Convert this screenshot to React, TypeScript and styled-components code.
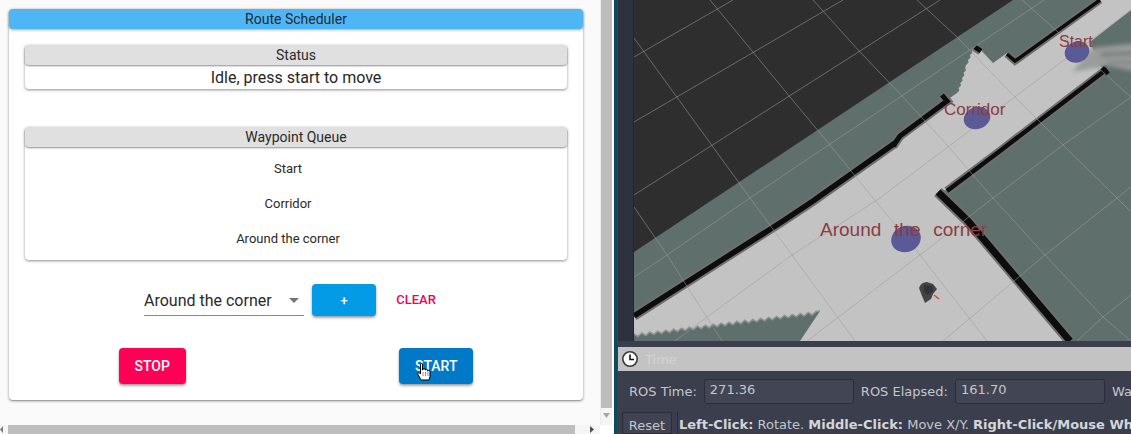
import React from "react";
import styled, { createGlobalStyle } from "styled-components";

const Global = createGlobalStyle`
  html, body { margin: 0; padding: 0; background: #fff; overflow: hidden; }
  #root { width: 1131px; height: 434px; }
  * { box-sizing: border-box; }
`;

const Page = styled.div`
  display: flex;
  width: 1131px;
  height: 434px;
  overflow: hidden;
  font-family: Roboto, sans-serif;
`;

const LeftPane = styled.div`
  display: grid;
  grid-template-columns: 600px 12px;
  grid-template-rows: 425px 9px;
  width: 612px;
  flex: none;
  background: #fafafa;
`;

const Main = styled.main`
  padding: 9px 17px 0 9px;
`;

const Card = styled.section`
  height: 391px;
  background: #fff;
  border-radius: 4px;
  box-shadow: 0 1px 3px rgba(0, 0, 0, 0.4), 0 1px 1px rgba(0, 0, 0, 0.14);
  display: flex;
  flex-direction: column;
`;

const Title = styled.h1`
  margin: 0;
  height: 20px;
  background: #4fb6f5;
  border-radius: 4px;
  box-shadow: 0 1px 3px rgba(0, 0, 0, 0.35);
  color: #1f2a33;
  font-size: 14px;
  font-weight: 400;
  line-height: 20px;
  text-align: center;
`;

const Panel = styled.div<{ $top: number }>`
  margin: ${(p) => p.$top}px 16px 0;
  background: #fff;
  border-radius: 4px;
  box-shadow: 0 1px 3px rgba(0, 0, 0, 0.45);
`;

const PanelHead = styled.h2`
  margin: 0;
  height: 20px;
  background: #e0e0e0;
  border-radius: 4px;
  box-shadow: 0 1px 2px rgba(0, 0, 0, 0.45);
  color: #2a2a2a;
  font-size: 14px;
  font-weight: 400;
  line-height: 20px;
  text-align: center;
`;

const StatusText = styled.div`
  height: 24px;
  color: #262626;
  font-size: 16px;
  line-height: 25px;
  text-align: center;
`;

const Queue = styled.ul`
  margin: 0;
  padding: 4px 16px 4px 0;
  list-style: none;
`;

const QueueItem = styled.li`
  height: 35px;
  color: #2a2a2a;
  font-size: 13px;
  line-height: 35px;
  text-align: center;
`;

const PickerRow = styled.div`
  display: flex;
  justify-content: center;
  gap: 8px;
  margin-top: 24px;
  height: 32px;
`;

const Select = styled.div`
  position: relative;
  width: 160px;
  height: 32px;
  border-bottom: 1px solid #8a8a8a;
  color: #2a2a2a;
  font-size: 16px;
  line-height: 33px;
`;

const Caret = styled.svg`
  position: absolute;
  right: 5px;
  top: 14px;
`;

const Fill = styled.button<{ $bg: string; $size?: number; $w?: number }>`
  border: 0;
  padding: 0 16px;
  height: 100%;
  ${(p) => (p.$w ? `width: ${p.$w}px;` : "")}
  background: ${(p) => p.$bg};
  border-radius: 4px;
  color: #fff;
  font-family: Roboto, sans-serif;
  font-size: ${(p) => p.$size ?? 14}px;
  font-weight: 500;
  box-shadow: 0 2px 3px rgba(0, 0, 0, 0.28), 0 1px 2px rgba(0, 0, 0, 0.18);
`;

const TextButton = styled.button`
  border: 0;
  padding: 0 0 2px;
  width: 64px;
  background: none;
  color: #f50057;
  font-family: Roboto, sans-serif;
  font-size: 13px;
  font-weight: 500;
`;

const Actions = styled.div`
  display: flex;
  justify-content: space-around;
  height: 36px;
  margin-top: 32px;
  padding: 0 3px;
`;

const StartWrap = styled.div`
  position: relative;
`;

const HandCursor = styled.svg`
  position: absolute;
  left: 18px;
  top: 15px;
`;

const VScroll = styled.div`
  position: relative;
  background: #f5f5f5;
  border-left: 1px solid #ececec;
`;

const VThumb = styled.div`
  width: 11px;
  height: 408px;
  background: #bdbdbd;
`;

const VArrow = styled.svg`
  position: absolute;
  left: 2px;
  top: 413px;
`;

const HScroll = styled.div`
  display: flex;
  align-items: center;
  background: #f5f5f5;
`;

const HArrow = styled.svg`
  flex: none;
`;

const HThumb = styled.div`
  width: 567px;
  flex: none;
  height: 9px;
  margin: 0 15px 0 5px;
  background: #bdbdbd;
`;

const ScrollCorner = styled.div`
  background: #fff;
`;

const RightPane = styled.div`
  flex: 1;
  display: flex;
  flex-direction: column;
  border-left: 2px solid #fff;
  min-width: 0;
`;

const Frame = styled.div`
  flex: 1;
  display: flex;
  flex-direction: column;
  background: #3a3e4d;
  border-left: 3px solid #0e4a5a;
  min-width: 0;
  font-family: "DejaVu Sans", sans-serif;
  color: #c4c6cc;
  font-size: 13px;
`;

const ViewRow = styled.div`
  display: flex;
  height: 341px;
  background: #3a3e4d;
`;

const Dock = styled.div`
  width: 16px;
  flex: none;
  margin-left: 1px;
  background: #2d3140;
  border-right: 1px solid #23262f;
`;

const TimeBar = styled.div`
  display: flex;
  align-items: center;
  gap: 6px;
  height: 24px;
  margin: 6px 0 0 1px;
  padding-left: 3px;
  background: #c3c3c3;
  color: #d2d3d6;
`;

const TimeRow = styled.div`
  display: flex;
  align-items: center;
  height: 41px;
  padding-left: 12px;
  white-space: nowrap;
`;

const Label = styled.span`
  flex: none;
`;

const Field = styled.div<{ $left: number; $right: number }>`
  width: 150px;
  height: 25px;
  flex: none;
  margin: 0 ${(p) => p.$right}px 0 ${(p) => p.$left}px;
  padding-left: 5px;
  background: #414554;
  border: 1px solid #2a2d38;
  border-radius: 3px;
  line-height: 20px;
`;

const HelpRow = styled.div`
  display: flex;
  gap: 5px;
  height: 22px;
  padding-left: 5px;
  white-space: nowrap;
  overflow: hidden;
`;

const ResetButton = styled.div`
  width: 50px;
  flex: none;
  border: 1px solid #2a2d38;
  background: #3f4352;
  border-radius: 2px 2px 0 0;
  text-align: center;
  line-height: 25px;
`;

const HelpText = styled.div`
  padding-left: 1px;
  border-left: 1px solid #2a2d38;
  line-height: 25px;
  b { font-weight: 700; color: #d4d6da; }
`;

const jag = (pts: [number, number][], step: number, ax: number, ay: number) => {
  const out: string[] = [];
  for (let s = 0; s < pts.length - 1; s++) {
    const [x0, y0] = pts[s];
    const [x1, y1] = pts[s + 1];
    const n = Math.max(1, Math.round(Math.hypot(x1 - x0, y1 - y0) / step));
    for (let i = 0; i < n; i++) {
      const t = i / n;
      const k = i % 2 ? 1 : 0;
      out.push(`${x0 + (x1 - x0) * t + k * ax},${y0 + (y1 - y0) * t + k * ay}`);
    }
  }
  const l = pts[pts.length - 1];
  out.push(`${l[0]},${l[1]}`);
  return out.join(" ");
};

const freeEdge = jag([[957, 93], [962, 78], [966, 65], [972, 50]], 2.5, 1.5, 0);
const freeArea = `634,315 813,200 897,140 947,100 ${freeEdge} 978,47 993,63 1007,53 1015,60 1100,0 1131,0 1131,10 1090,42 1100,66 1107,70 947,190 938,192 968,220 1070,341 634,341`;

const sawEdge = jag([[634, 334], [820, 311]], 4, 0, 3);

const gridLines = [
  "634,57 733,0",
  "634,122 843,0",
  "634,195 940,0",
  "634,277 667,255 750,198 1044,0",
  "675,341 707,317 792,255 877,200 1131,10",
  "807,341 920,255 993,198 1063,145 1131,97",
  "943,341 1045,255 1117,198 1131,187",
  "1077,341 1103,317 1131,295",
  "634,207 667,255 722,341",
  "634,38 750,198 792,255 855,341",
  "710,0 753,52 790,97 830,145 873,198 920,255 987,341",
  "813,0 860,52 903,97 947,145 993,198 1045,255 1103,317 1131,341",
  "917,0 958,38 1015,97 1063,145 1117,198 1131,212",
  "1022,0 1131,97",
];

const walls: { p: string; w: number }[] = [
  { p: "634,316 783,221 813,201 895,143", w: 5.5 },
  { p: "893,146 900,136 947,101 942,95", w: 5 },
  { p: "975,47 981,51", w: 5 },
  { p: "1007,54 1015,61 1100,0", w: 3.5 },
  { p: "1107,69 1000,151 947,191", w: 4.5 },
  { p: "1102,68 1108,74", w: 5 },
  { p: "938,192 968,221 1070,341", w: 7 },
];

const MapView = () => (
  <svg width="497" height="341" viewBox="634 0 497 341" style={{ display: "block", flex: "none" }}>
    <defs>
      <filter id="soft" filterUnits="userSpaceOnUse" x="1050" y="30" width="100" height="60">
        <feGaussianBlur stdDeviation="2" />
      </filter>
    </defs>
    <rect x="634" y="0" width="497" height="341" fill="#5f6f6c" />
    <polygon points="634,0 1013,0 634,252" fill="#2e2e2e" />
    <polygon points={freeArea} fill="#c3c3c3" />
    <g filter="url(#soft)">
      <polygon points="1092,48 1140,43 1140,72 1108,66 1072,72" fill="#9a9d9c" />
      <polygon points="1100,52 1140,50 1140,56 1100,57" fill="#7f8584" />
      <polygon points="1105,61 1140,60 1140,65 1108,65" fill="#868c8b" />
    </g>
    <polygon points={`${sawEdge} 806,332 800,341 634,341`} fill="#5f6f6c" />
    <polyline points={sawEdge} fill="none" stroke="#8d9392" strokeWidth="1.5" />
    {walls.map(({ p, w }) => (
      <polyline key={"h" + p} points={p} fill="none" stroke="#6f6f6f" strokeWidth={w + 4} />
    ))}
    {walls.map(({ p, w }) => (
      <polyline key={p} points={p} fill="none" stroke="#0d0d0d" strokeWidth={w} />
    ))}
    {gridLines.map((p) => (
      <polyline key={"g" + p} points={p} fill="none" stroke="#9d9d9d" strokeWidth="1" opacity="0.55" />
    ))}
    <ellipse cx="1077" cy="52" rx="12.5" ry="10.5" fill="#5a5a96" transform="rotate(-20 1077 52)" />
    <ellipse cx="977" cy="118" rx="13.5" ry="11" fill="#5a5a96" transform="rotate(-20 977 118)" />
    <ellipse cx="906" cy="239" rx="15" ry="13" fill="#5a5a96" transform="rotate(-20 906 239)" />
    <g fill="#8c3c40" fontFamily="'Liberation Sans', sans-serif">
      <text x="1059" y="47" fontSize="16">Start</text>
      <text x="944" y="115" fontSize="17">Corridor</text>
      <text x="820" y="236" fontSize="19" wordSpacing="7.5">Around the corner</text>
    </g>
    <path d="M919 288 Q921 282 927 282 L933 284 L937 289 L933 294 L931 299 L925 303 L922 296 Z" fill="#444" />
    <path d="M924 285 L932 286 L933 291 L928 295 L924 292 Z" fill="#333" />
    <path d="M934 295 L939 299" stroke="#e53935" strokeWidth="1.3" />
  </svg>
);

export default function App() {
  return (
    <>
      <Global />
      <Page>
        <LeftPane>
          <Main>
            <Card>
              <Title>Route Scheduler</Title>
              <Panel $top={16}>
                <PanelHead>Status</PanelHead>
                <StatusText>Idle, press start to move</StatusText>
              </Panel>
              <Panel $top={38}>
                <PanelHead>Waypoint Queue</PanelHead>
                <Queue>
                  <QueueItem>Start</QueueItem>
                  <QueueItem>Corridor</QueueItem>
                  <QueueItem>Around the corner</QueueItem>
                </Queue>
              </Panel>
              <PickerRow>
                <Select>
                  Around the corner
                  <Caret width="10" height="5" viewBox="0 0 10 5">
                    <path d="M0 0h10L5 5z" fill="#757575" />
                  </Caret>
                </Select>
                <Fill $bg="#039be5" $size={13} $w={64}>+</Fill>
                <TextButton>CLEAR</TextButton>
              </PickerRow>
              <Actions>
                <Fill $bg="#ff0057">STOP</Fill>
                <StartWrap>
                  <Fill $bg="#0079c9">START</Fill>
                  <HandCursor width="15" height="18" viewBox="0 0 15 18">
                    <path
                      d="M3.5 1.5c0-1.3 2-1.3 2 0V7h.5V6c0-1 2-1 2 0v1h.5c0-1 2-1 2 0v1h.5c0-1 2-1 2 0v5.5l-1 3.5H4L1 11.5C.4 10 1.6 9 2.6 10l.9 1z"
                      fill="#fff"
                      stroke="#000"
                      strokeWidth="1"
                    />
                    <path d="M6 9v4M8.5 9v4M11 9v4" stroke="#777" strokeWidth=".8" />
                  </HandCursor>
                </StartWrap>
              </Actions>
            </Card>
          </Main>
          <VScroll>
            <VThumb />
            <VArrow width="7" height="5" viewBox="0 0 7 5">
              <path d="M0 0h7L3.5 5z" fill="#a6a6a6" />
            </VArrow>
          </VScroll>
          <HScroll>
            <HArrow width="3" height="7" viewBox="0 0 3 7">
              <path d="M3 0v7L0 3.5z" fill="#7a7a7a" />
            </HArrow>
            <HThumb />
            <HArrow width="4" height="7" viewBox="0 0 4 7">
              <path d="M0 0v7l4-3.5z" fill="#505050" />
            </HArrow>
          </HScroll>
          <ScrollCorner />
        </LeftPane>
        <RightPane>
          <Frame>
            <ViewRow>
              <Dock />
              <MapView />
            </ViewRow>
            <TimeBar>
              <svg width="18" height="18" viewBox="0 0 18 18">
                <circle cx="9" cy="9" r="7.2" fill="#fff" stroke="#3a3a3a" strokeWidth="1.6" />
                <path d="M9 4.5V9.5H13" fill="none" stroke="#111" strokeWidth="1.6" />
              </svg>
              Time
            </TimeBar>
            <TimeRow>
              <Label>ROS Time:</Label>
              <Field $left={7} $right={7}>271.36</Field>
              <Label>ROS Elapsed:</Label>
              <Field $left={7} $right={7}>161.70</Field>
              <Label>Wa</Label>
            </TimeRow>
            <HelpRow>
              <ResetButton>Reset</ResetButton>
              <HelpText>
                <b>Left-Click:</b> Rotate. <b>Middle-Click:</b> Move X/Y. <b>Right-Click/Mouse Wh</b>
              </HelpText>
            </HelpRow>
          </Frame>
        </RightPane>
      </Page>
    </>
  );
}
